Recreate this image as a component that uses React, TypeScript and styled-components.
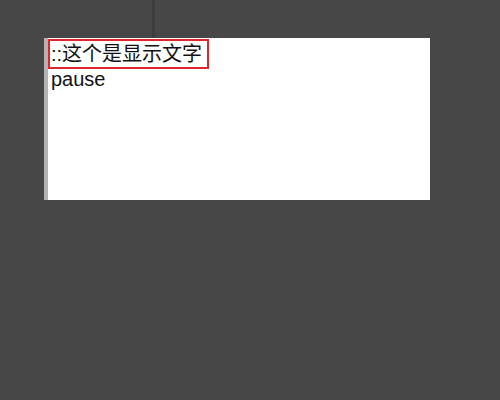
import React from "react";
import styled, { createGlobalStyle } from "styled-components";

const GlobalStyle = createGlobalStyle`
  html, body {
    margin: 0;
    padding: 0;
    background: #474747;
    width: 500px;
    height: 400px;
    overflow: hidden;
  }
`;

const Stage = styled.div`
  position: relative;
  width: 500px;
  height: 400px;
  padding: 38px 0 0 44px;
  box-sizing: border-box;
`;

// thin divider line above the panel
const Divider = styled.div`
  position: absolute;
  left: 152px;
  top: 0;
  width: 3px;
  height: 38px;
  background: #3d3d3d;
`;

const Panel = styled.div`
  width: 386px;
  height: 162px;
  box-sizing: border-box;
  background: #ffffff;
  border-left: 4px solid #b4b4b4;
  padding: 1px 0 0 0;
  font-family: "Liberation Sans", "Noto Sans CJK SC", sans-serif;
  color: #111;
`;

const Caption = styled.div`
  box-sizing: border-box;
  height: 30px;
  width: 161px;
  border: 2px solid #e0252f;
  padding: 2px 0 0 1px;
  font-size: 20px;
  line-height: 22px;
  white-space: nowrap;
`;

const Status = styled.div`
  padding-left: 3px;
  font-size: 20px;
  line-height: 21px;
`;

const App: React.FC = () => {
  return (
    <>
      <GlobalStyle />
      <Stage>
        <Divider />
        <Panel>
          <Caption>::这个是显示文字</Caption>
          <Status>pause</Status>
        </Panel>
      </Stage>
    </>
  );
};

export default App;
